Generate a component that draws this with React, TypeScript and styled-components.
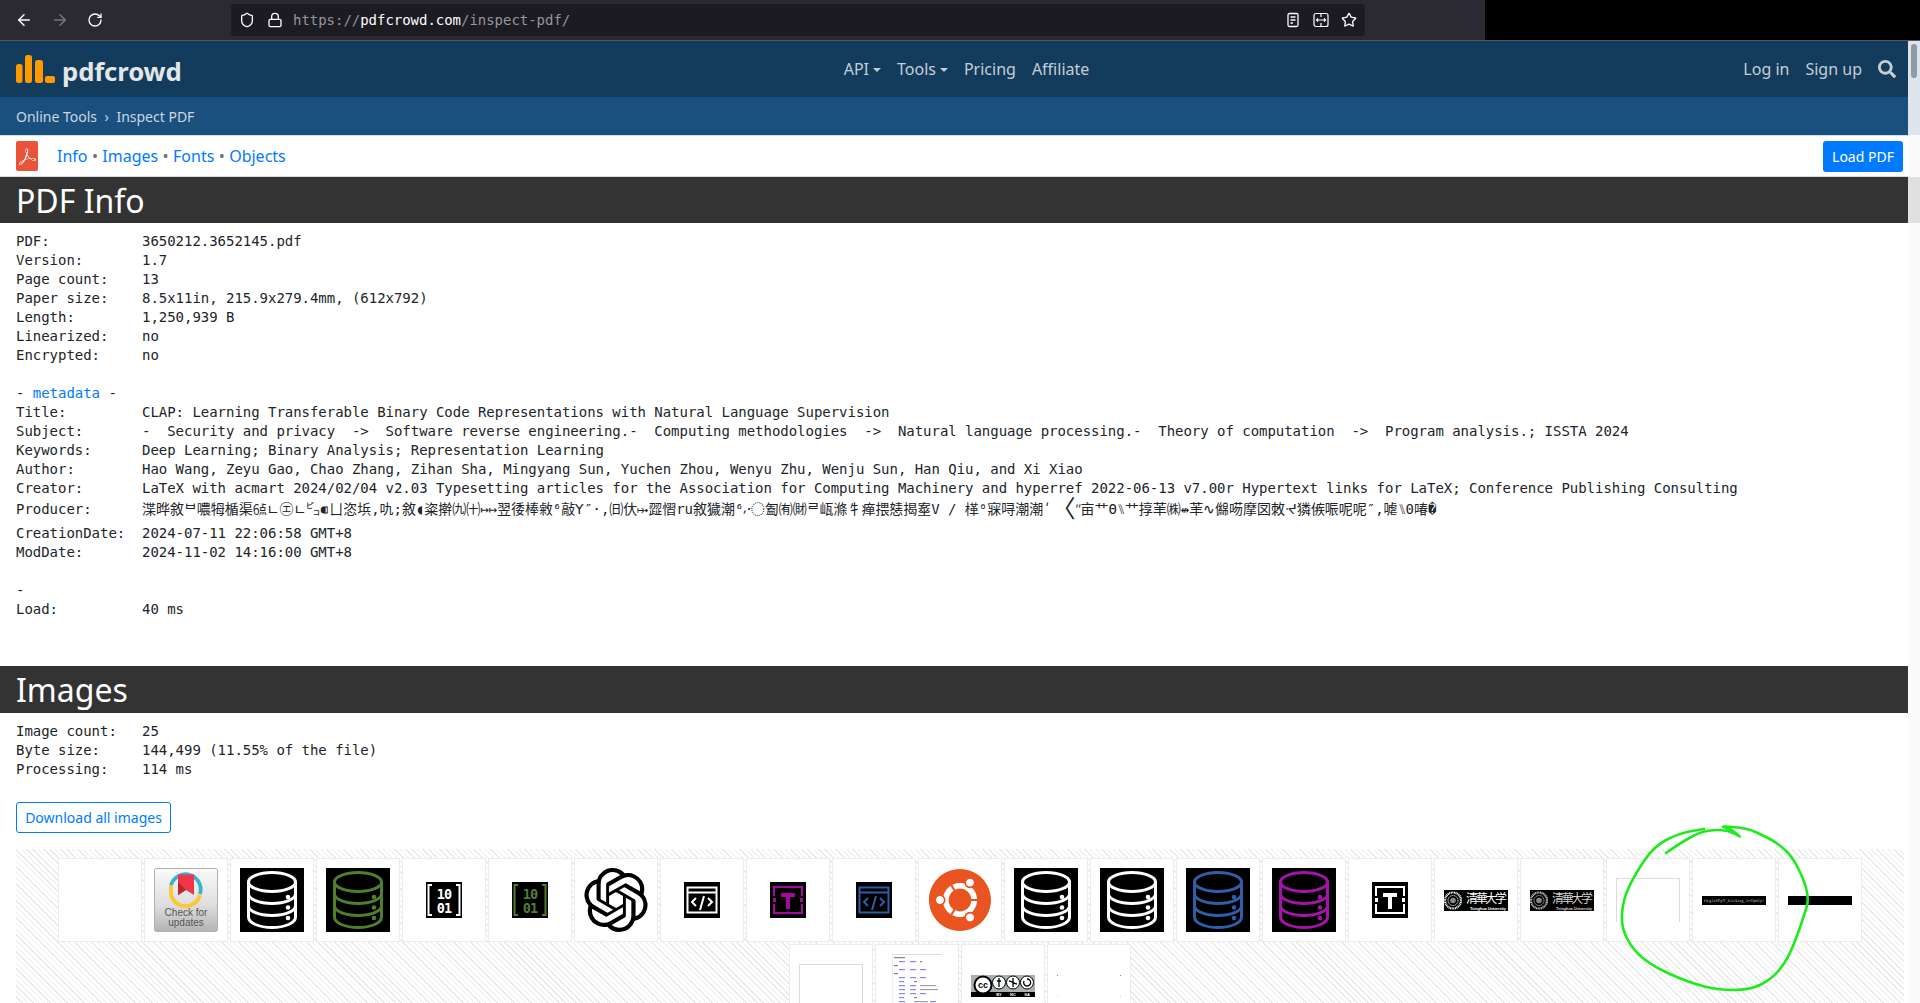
import React from 'react';
import styled, { createGlobalStyle } from 'styled-components';
import { ArrowLeft, ArrowRight, RotateCw, Shield, Lock, Star } from 'lucide-react';
import { FaSearch, FaUbuntu } from 'react-icons/fa';
import { SiOpenai, SiAdobeacrobatreader } from 'react-icons/si';

const SANS = '"Noto Sans", "Open Sans", sans-serif';
const MONO = '"DejaVu Sans Mono", "Noto Sans CJK SC", monospace';

const Global = createGlobalStyle`
  html, body { margin: 0; padding: 0; height: 100%; overflow: hidden; background: #fff; }
  #root { height: 100%; }
  * { box-sizing: border-box; }
`;

const Shell = styled.div`
  position: relative;
  width: 1920px;
  height: 1003px;
  overflow: hidden;
  display: flex;
  flex-direction: column;
  font-family: ${SANS};
  font-size: 16px;
  color: #212529;
`;

const BrowserStrip = styled.div`
  flex: none;
  height: 41px;
  background: #000;
  border-bottom: 1px solid #55555a;
  display: flex;
`;
const BrowserChrome = styled.div`
  width: 1485px;
  height: 40px;
  background: #2b2a33;
  display: flex;
  align-items: center;
  padding-left: 15px;
`;
const NavButton = styled.span<{ $dim?: boolean }>`
  width: 36px;
  display: flex;
  justify-content: flex-start;
  color: ${(p) => (p.$dim ? '#77767c' : '#fbfbfe')};
`;
const UrlBar = styled.div`
  margin-left: 108px;
  width: 1134px;
  height: 32px;
  background: #1c1b22;
  border-radius: 4px;
  display: flex;
  align-items: center;
  padding: 0 8px;
  color: #fbfbfe;
`;
const UrlIcon = styled.span`
  width: 28px;
  display: flex;
  align-items: center;
`;
const UrlText = styled.span`
  margin-left: -2px;
  font-family: "DejaVu Sans Mono", monospace;
  font-size: 14px;
  letter-spacing: -0.03px;
  color: #96959a;
  flex: 1;
`;
const UrlHost = styled.span`
  color: #fbfbfe;
`;
const UrlActions = styled.div`
  display: flex;
  align-items: center;
  gap: 12px;
`;

const Viewport = styled.div`
  flex: 1;
  min-height: 0;
  display: flex;
`;
const Page = styled.div`
  flex: 1;
  min-width: 0;
  overflow: hidden;
`;
const ScrollRail = styled.div`
  flex: none;
  width: 12px;
  padding: 3px 3px 0;
  background: linear-gradient(
    to bottom,
    #dde4eb 0 94px,
    #fafafa 94px 136px,
    #e0e0e0 136px 182px,
    #fafafa 182px
  );
`;
const ScrollThumb = styled.div`
  width: 6px;
  height: 34px;
  border-radius: 3px;
  background: #8e9aa4;
`;

const Navbar = styled.nav`
  height: 56px;
  background: #133c5c;
  display: flex;
  align-items: center;
  justify-content: space-between;
  padding: 0 12px 0 16px;
`;
const Brand = styled.div`
  display: flex;
  align-items: center;
  gap: 7px;
  margin-top: -1px;
`;
const BrandName = styled.span`
  font-size: 25.7px;
  font-weight: 700;
  line-height: 32px;
  color: #e4e6e8;
  margin-top: 7px;
  letter-spacing: -0.1px;
`;
const NavGroup = styled.div<{ $shift?: number }>`
  display: flex;
  align-items: center;
  gap: 16px;
  margin-left: ${(p) => p.$shift ?? 0}px;
  margin-top: -1px;
`;
const NavLink = styled.span<{ $caret?: boolean }>`
  color: #c4ced7;
  line-height: 24px;
  &::after {
    content: ${(p) => (p.$caret ? "''" : 'none')};
    display: inline-block;
    margin-left: 4px;
    vertical-align: 3px;
    border-top: 4.8px solid currentColor;
    border-left: 4.8px solid transparent;
    border-right: 4.8px solid transparent;
  }
`;
const SearchIcon = styled.span`
  display: flex;
  color: #c4ced7;
`;

const Crumbs = styled.div`
  height: 38px;
  background: #1a507e;
  display: flex;
  align-items: center;
  padding-left: 16px;
  gap: 7.5px;
  font-size: 14px;
  color: #ccd7e1;
`;

const SubBar = styled.div`
  height: 42px;
  background: #fff;
  border-top: 1px solid #cfe0ea;
  border-bottom: 1px solid #d8dde2;
  display: flex;
  align-items: center;
  padding: 0 5px 0 16px;
`;
const PdfBadge = styled.span`
  width: 22px;
  height: 30px;
  border-radius: 2px;
  background: #e9533a;
  color: #fff;
  display: flex;
  align-items: center;
  justify-content: center;
`;
const SubLinks = styled.div`
  margin-left: 19px;
  flex: 1;
  color: #6c757d;
  display: flex;
  gap: 4.4px;
`;
const Anchor = styled.span`
  color: #007bff;
`;
const LoadButton = styled.span`
  width: 80px;
  height: 31px;
  background: #007bff;
  border-radius: 3px;
  color: #fff;
  font-size: 14px;
  display: flex;
  align-items: center;
  justify-content: center;
`;

const SectionTitle = styled.h2<{ $h: number }>`
  margin: 0;
  height: ${(p) => p.$h}px;
  background: #333;
  color: #fff;
  font-size: 32px;
  font-weight: 400;
  line-height: 38px;
  padding: 5px 16px 3px;
`;
const Meta = styled.div<{ $top: number; $bottom: number }>`
  padding: ${(p) => p.$top}px 16px ${(p) => p.$bottom}px;
  font-family: ${MONO};
  font-size: 14px;
  line-height: 19px;
  letter-spacing: -0.03px;
  color: #212529;
  white-space: pre;
`;
const Row = styled.div<{ $gapTop?: number; $gapBottom?: number }>`
  display: grid;
  grid-template-columns: 126px 1fr;
  height: 19px;
  margin-top: ${(p) => p.$gapTop ?? 0}px;
  margin-bottom: ${(p) => p.$gapBottom ?? 0}px;
`;
const Line = styled.div`
  height: 19px;
`;
const TallGlyph = styled.span`
  display: inline-block;
  font-size: 24px;
  line-height: 19px;
  vertical-align: -3px;
`;
const DownloadButton = styled.span`
  display: block;
  width: 155px;
  height: 31px;
  margin: 0 0 16px 16px;
  border: 1px solid #007bff;
  border-radius: 3px;
  color: #007bff;
  font-size: 14px;
  line-height: 29px;
  text-align: center;
`;
const Gallery = styled.div`
  margin: 0 4px 0 16px;
  padding: 8px 0;
  display: flex;
  flex-wrap: wrap;
  justify-content: center;
  background: repeating-linear-gradient(45deg, #e9e9e9 0 1px, #fff 1px 4px);
`;
const Tile = styled.div`
  width: 84px;
  height: 84px;
  margin: 1px;
  background: #fff;
  border: 1px solid #ececec;
  display: flex;
  align-items: center;
  justify-content: center;
  overflow: visible;
`;
const Scribble = styled.svg`
  position: absolute;
  left: 0;
  top: 0;
  pointer-events: none;
`;

function Db({ c }: { c: string }) {
  return (
    <svg width="64" height="64" viewBox="0 0 64 64">
      <rect width="64" height="64" fill="#000" />
      <g fill="none" stroke={c} strokeWidth="3">
        <ellipse cx="32" cy="14" rx="23.5" ry="9.5" />
        <path d="M8.5 14V49C8.5 55 19 59.5 32 59.5S55.5 55 55.5 49V14" />
        <path d="M8.5 26C8.5 31 19 35.5 32 35.5S55.5 31 55.5 26" />
        <path d="M8.5 38C8.5 43 19 47.5 32 47.5S55.5 43 55.5 38" />
      </g>
      <g fill={c}>
        <circle cx="48" cy="29" r="2.3" />
        <circle cx="48" cy="39.5" r="2.3" />
        <circle cx="48" cy="50" r="2.3" />
      </g>
    </svg>
  );
}
function Binary({ c }: { c: string }) {
  return (
    <svg width="36" height="36" viewBox="0 0 36 36">
      <rect width="36" height="36" fill="#000" />
      <path d="M6 3H2.500V33H6M30 3H33.500V33H30" fill="none" stroke={c} strokeWidth="2" />
      <g fill={c} fontFamily='"DejaVu Sans Mono", monospace' fontWeight="700" fontSize="13.500" letterSpacing="-0.8" textAnchor="middle">
        <text x="18" y="16.500">10</text>
        <text x="18" y="30.500">01</text>
      </g>
    </svg>
  );
}
function CodeWin({ c }: { c: string }) {
  return (
    <svg width="36" height="36" viewBox="0 0 36 36">
      <rect width="36" height="36" fill="#000" />
      <rect x="3.500" y="5.500" width="29" height="25" fill="none" stroke={c} strokeWidth="2" />
      <path d="M3.500 10.500H32.500" stroke={c} strokeWidth="2" />
      <path d="M12 16l-4 4 4 4M24 16l4 4-4 4M20 14l-4 14" fill="none" stroke={c} strokeWidth="2" />
    </svg>
  );
}
function TextBox({ c }: { c: string }) {
  return (
    <svg width="36" height="36" viewBox="0 0 36 36">
      <rect width="36" height="36" fill="#000" />
      <path d="M4 14V5H32V14M4 22V31H32V22" fill="none" stroke={c} strokeWidth="2" />
      <rect x="3" y="16" width="3" height="4" fill={c} />
      <rect x="30" y="16" width="3" height="4" fill={c} />
      <path d="M11 11H25V15H20V27H16V15H11Z" fill={c} />
    </svg>
  );
}
function CheckUpdates() {
  return (
    <svg width="64" height="64" viewBox="0 0 64 64">
      <defs>
        <linearGradient id="cfu" x1="0" y1="0" x2="0" y2="1">
          <stop offset="0" stopColor="#fafafa" />
          <stop offset="0.6" stopColor="#dcdcdc" />
          <stop offset="1" stopColor="#b4b4b4" />
        </linearGradient>
      </defs>
      <rect x="0.500" y="0.500" width="63" height="63" rx="2" fill="url(#cfu)" stroke="#b0b0b0" />
      <path d="M17 17A15 15 0 0 1 46 26" fill="none" stroke="#36b4ce" strokeWidth="3.800" />
      <path d="M46 27A15 15 0 0 1 17 27" fill="none" stroke="#fcc82f" strokeWidth="3.800" />
      <path d="M17 17V27" stroke="#fcc82f" strokeWidth="3.800" />
      <path d="M24 6.500H40V27L32 22L24 27Z" fill="#f0344a" />
      <path d="M24 14L32 22L24 27Z" fill="#b5292a" />
      <g fill="#555" fontFamily='"Liberation Sans", sans-serif' fontSize="10" textAnchor="middle">
        <text x="32" y="48">Check for</text>
        <text x="32" y="57.500">updates</text>
      </g>
    </svg>
  );
}
function Tsinghua({ soft }: { soft?: boolean }) {
  const c = soft ? '#cfcfcf' : '#fff';
  return (
    <svg width="64" height="21" viewBox="0 0 64 21">
      <rect width="64" height="21" fill="#000" />
      <circle cx="9" cy="10.500" r="8" fill="none" stroke={c} strokeWidth="2.200" strokeDasharray="1 .6" />
      <circle cx="9" cy="10.500" r="5" fill="none" stroke={c} strokeWidth=".800" strokeDasharray="1.500 .5" />
      <circle cx="9" cy="10.500" r="2.800" fill="#888" />
      <text x="22" y="12.500" fill={c} fontFamily='"Noto Sans CJK SC", sans-serif' fontWeight="400" fontSize="12" textLength="41">清華大学</text>
      <text x="26" y="19.500" fill={c} fontFamily='"Liberation Sans", sans-serif' fontWeight="700" fontSize="4" textLength="36">Tsinghua University</text>
    </svg>
  );
}
function OutlineBox() {
  return (
    <svg width="64" height="64" viewBox="0 0 64 64">
      <path d="M.5 54V10.500H63.500V54" fill="none" stroke="#dcdcdc" />
    </svg>
  );
}
function FlagBar() {
  return (
    <svg width="64" height="9" viewBox="0 0 64 9">
      <rect width="64" height="9" fill="#000" />
      <text x="2" y="6" fill="#ddd" fontFamily='"Liberation Serif", serif' fontSize="3.600" textLength="60">flag{'{'}n0PpY_hAcking_3v0lpbly{'}'}</text>
    </svg>
  );
}
function BlackBar() {
  return (
    <svg width="64" height="9" viewBox="0 0 64 9">
      <rect width="64" height="9" fill="#000" />
    </svg>
  );
}
const listing: [number, number, number, string][] = [
  [2, 3, 11, '#666'], [7, 7, 6, '#66f'], [18, 7, 6, '#66f'], [28, 7, 2, '#666'],
  [2, 11, 4, '#666'], [7, 15, 6, '#66f'], [18, 15, 6, '#66f'], [28, 15, 6, '#66f'],
  [2, 19, 4, '#666'], [7, 23, 6, '#66f'], [18, 23, 6, '#66f'], [28, 23, 6, '#66f'],
  [7, 27, 5, '#66f'], [22, 27, 3, '#666'], [7, 31, 6, '#66f'], [18, 31, 6, '#66f'], [28, 31, 16, '#888'],
  [7, 35, 6, '#66f'], [18, 35, 6, '#66f'], [28, 35, 18, '#888'], [7, 39, 6, '#66f'], [18, 39, 6, '#66f'], [28, 39, 6, '#66f'],
  [7, 43, 5, '#66f'], [22, 43, 3, '#666'], [7, 47, 6, '#66f'], [22, 47, 14, '#888'], [38, 47, 6, '#66f'],
  [7, 51, 6, '#66f'], [22, 51, 16, '#888'], [40, 51, 6, '#66f'], [2, 55, 4, '#666'], [7, 59, 6, '#66f'], [22, 59, 6, '#666'], [7, 63, 5, '#66f'], [22, 63, 3, '#666'],
];
function Listing() {
  return (
    <svg width="50" height="64" viewBox="0 0 50 64">
      <path d="M0 64V.5H50" fill="none" stroke="#ddd" />
      {listing.map(([x, y, w, c], i) => (
        <rect key={i} x={x} y={y} width={w} height="1.200" fill={c} opacity="0.800" />
      ))}
    </svg>
  );
}
function CcBadge() {
  return (
    <svg width="64" height="22" viewBox="0 0 64 22">
      <rect width="64" height="22" fill="#aab2ab" />
      <rect y="17" width="64" height="5" fill="#000" />
      <g stroke="#000" strokeWidth="1" fill="#fff">
        <circle cx="12" cy="10" r="8.500" strokeWidth="2" />
        <circle cx="28" cy="7.500" r="6.500" />
        <circle cx="42" cy="7.500" r="6.500" />
        <circle cx="56" cy="7.500" r="6.500" />
      </g>
      <text x="12" y="13" textAnchor="middle" fontFamily='"Liberation Sans", sans-serif' fontWeight="700" fontSize="9">cc</text>
      <path d="M28 3v9M26 6h4M42 3v9M38 6c3 0 5 3 8 3M56 4a3.500 3.500 0 1 1-3 2" stroke="#000" fill="none" strokeWidth="1.300" />
      <g fill="#fff" fontFamily='"Liberation Sans", sans-serif' fontWeight="700" fontSize="4" textAnchor="middle">
        <text x="28" y="21.300">BY</text>
        <text x="42" y="21.300">NC</text>
        <text x="56" y="21.300">SA</text>
      </g>
    </svg>
  );
}
function Specks() {
  return (
    <svg width="64" height="64" viewBox="0 0 64 64">
      <rect x="0" y="21" width="1" height="1" fill="#888" />
      <rect x="63" y="21" width="1" height="1" fill="#888" />
      <rect x="0" y="42" width="1" height="1" fill="#ccc" />
      <rect x="63" y="42" width="1" height="1" fill="#ccc" />
    </svg>
  );
}

const GREEN = '#4f7f2d';
const BLUE = '#2f5da8';
const PURPLE = '#a514a8';
const tiles: React.ReactNode[] = [
  null,
  <CheckUpdates />,
  <Db c="#fff" />,
  <Db c={GREEN} />,
  <Binary c="#fff" />,
  <Binary c={GREEN} />,
  <SiOpenai size={64} color="#000" />,
  <CodeWin c="#fff" />,
  <TextBox c="#a4089f" />,
  <CodeWin c={BLUE} />,
  <FaUbuntu size={64} color="#e95420" />,
  <Db c="#fff" />,
  <Db c="#fff" />,
  <Db c={BLUE} />,
  <Db c={PURPLE} />,
  <TextBox c="#fff" />,
  <Tsinghua />,
  <Tsinghua soft />,
  <OutlineBox />,
  <FlagBar />,
  <BlackBar />,
  <OutlineBox />,
  <Listing />,
  <CcBadge />,
  <Specks />,
];

const info: [string, string][] = [
  ['PDF:', '3650212.3652145.pdf'],
  ['Version:', '1.7'],
  ['Page count:', '13'],
  ['Paper size:', '8.5x11in, 215.9x279.4mm, (612x792)'],
  ['Length:', '1,250,939 B'],
  ['Linearized:', 'no'],
  ['Encrypted:', 'no'],
];
const meta: [string, string][] = [
  ['Title:', 'CLAP: Learning Transferable Binary Code Representations with Natural Language Supervision'],
  ['Subject:', '-  Security and privacy  ->  Software reverse engineering.-  Computing methodologies  ->  Natural language processing.-  Theory of computation  ->  Program analysis.; ISSTA 2024'],
  ['Keywords:', 'Deep Learning; Binary Analysis; Representation Learning'],
  ['Author:', 'Hao Wang, Zeyu Gao, Chao Zhang, Zihan Sha, Mingyang Sun, Yuchen Zhou, Wenyu Zhu, Wenju Sun, Han Qiu, and Xi Xiao'],
  ['Creator:', 'LaTeX with acmart 2024/02/04 v2.03 Typesetting articles for the Association for Computing Machinery and hyperref 2022-06-13 v7.00r Hypertext links for LaTeX; Conference Publishing Consulting'],
];
const producerA = '渫晔敘ᄇ噥牳楯渠㍞ㄴ㋓ㄴ㌰⁌ㄩ恣㙃,㕤;敘◖粢擀㈨㈩↦↦翌㣦棒敹⁶敲ꓬ″·,㈰㐲⤠歰慴ru敘獩潮⁶⸴〮㔩㈲㈶ᄅ㼘滌牜瘅揋㥨揭㝧V / 㮖⁰㝥㖊潮潮ʹ';
const producerB = 'ʺ亩艹Θ⑊艹㨃䒠㈱↮䒠∿㒙㖴摩㘝敇ᔵ獜㑵㖘呢呢″,㖸⑊0㖺�';

const points: [number, number][] = [
  [1666, 853], [1680, 843], [1704, 830], [1729, 830], [1743, 839], [1731, 829], [1719, 826], [1747, 828],
  [1764, 836], [1776, 842], [1792, 856], [1804, 880], [1809, 900], [1804, 915], [1800, 928], [1788, 959],
  [1772, 979], [1750, 990], [1717, 990], [1688, 982], [1654, 967], [1633, 950], [1621, 927], [1623, 900],
  [1634, 876], [1654, 846], [1680, 833], [1704, 829],
];
const scribble = points.reduce((d, p, i) => {
  if (i === 0) return `M${p[0]} ${p[1]}`;
  const n = points[i + 1];
  if (!n) return `${d}L${p[0]} ${p[1]}`;
  return `${d}Q${p[0]} ${p[1]} ${(p[0] + n[0]) / 2} ${(p[1] + n[1]) / 2}`;
}, '');

export default function App() {
  return (
    <Shell>
      <Global />
      <BrowserStrip>
        <BrowserChrome>
          <NavButton><ArrowLeft size={18} /></NavButton>
          <NavButton $dim><ArrowRight size={18} /></NavButton>
          <NavButton><RotateCw size={16} /></NavButton>
          <UrlBar>
            <UrlIcon><Shield size={16} /></UrlIcon>
            <UrlIcon><Lock size={16} /></UrlIcon>
            <UrlText>https://<UrlHost>pdfcrowd.com</UrlHost>/inspect-pdf/</UrlText>
            <UrlActions>
              <svg width="16" height="16" viewBox="0 0 16 16" fill="none" stroke="#fbfbfe" strokeWidth="1.300">
                <rect x="3" y="1.500" width="10" height="13" rx="1.500" />
                <path d="M5.500 5H10.500M5.500 8H10.500M5.500 11H8" />
              </svg>
              <svg width="16" height="16" viewBox="0 0 16 16" fill="none" stroke="#fbfbfe" strokeWidth="1.200">
                <rect x="1" y="1.500" width="14" height="13" rx="2" />
                <path d="M8 1.500V5M8 11V14.500M3.500 8H12.500M5 6.500L3.500 8L5 9.500M11 6.500L12.500 8L11 9.500" />
              </svg>
              <Star size={16} />
            </UrlActions>
          </UrlBar>
        </BrowserChrome>
      </BrowserStrip>
      <Viewport>
        <Page>
          <Navbar>
            <Brand>
              <svg width="39" height="28" viewBox="0 0 39 28" fill="#ff9900">
                <rect x="0" y="9" width="6.500" height="19" rx="2.500" />
                <rect x="9" y="0" width="7" height="28" rx="2.500" />
                <rect x="19" y="5" width="8" height="23" rx="2.500" />
                <rect x="29" y="21" width="10" height="7" rx="2" />
              </svg>
              <BrandName>pdfcrowd</BrandName>
            </Brand>
            <NavGroup $shift={8}>
              <NavLink $caret>API</NavLink>
              <NavLink $caret>Tools</NavLink>
              <NavLink>Pricing</NavLink>
              <NavLink>Affiliate</NavLink>
            </NavGroup>
            <NavGroup>
              <NavLink>Log in</NavLink>
              <NavLink>Sign up</NavLink>
              <SearchIcon><FaSearch size={18} /></SearchIcon>
            </NavGroup>
          </Navbar>
          <Crumbs>
            <span>Online Tools</span>
            <span>›</span>
            <span>Inspect PDF</span>
          </Crumbs>
          <SubBar>
            <PdfBadge><SiAdobeacrobatreader size={17} /></PdfBadge>
            <SubLinks>
              <Anchor>Info</Anchor>•<Anchor>Images</Anchor>•<Anchor>Fonts</Anchor>•<Anchor>Objects</Anchor>
            </SubLinks>
            <LoadButton>Load PDF</LoadButton>
          </SubBar>

          <SectionTitle $h={46}>PDF Info</SectionTitle>
          <Meta $top={9} $bottom={47}>
            {info.map(([k, v]) => (
              <Row key={k}><span>{k}</span><span>{v}</span></Row>
            ))}
            <Line />
            <Line>- <Anchor>metadata</Anchor> -</Line>
            {meta.map(([k, v]) => (
              <Row key={k}><span>{k}</span><span>{v}</span></Row>
            ))}
            <Row $gapTop={2} $gapBottom={5}>
              <span>Producer:</span>
              <span>{producerA}<TallGlyph>〈</TallGlyph>{producerB}</span>
            </Row>
            <Row><span>CreationDate:</span><span>2024-07-11 22:06:58 GMT+8</span></Row>
            <Row><span>ModDate:</span><span>2024-11-02 14:16:00 GMT+8</span></Row>
            <Line />
            <Line>-</Line>
            <Row><span>Load:</span><span>40 ms</span></Row>
          </Meta>

          <SectionTitle $h={47}>Images</SectionTitle>
          <Meta $top={9} $bottom={23}>
            <Row><span>Image count:</span><span>25</span></Row>
            <Row><span>Byte size:</span><span>144,499 (11.55% of the file)</span></Row>
            <Row><span>Processing:</span><span>114 ms</span></Row>
          </Meta>
          <DownloadButton>Download all images</DownloadButton>
          <Gallery>
            {tiles.map((t, i) => (
              <Tile key={i}>{t}</Tile>
            ))}
          </Gallery>
        </Page>
        <ScrollRail><ScrollThumb /></ScrollRail>
      </Viewport>
      <Scribble width="1920" height="1003" viewBox="0 0 1920 1003">
        <path d={scribble} fill="none" stroke="#1eea1e" strokeWidth="2.600" strokeLinejoin="round" strokeLinecap="round" />
      </Scribble>
    </Shell>
  );
}
